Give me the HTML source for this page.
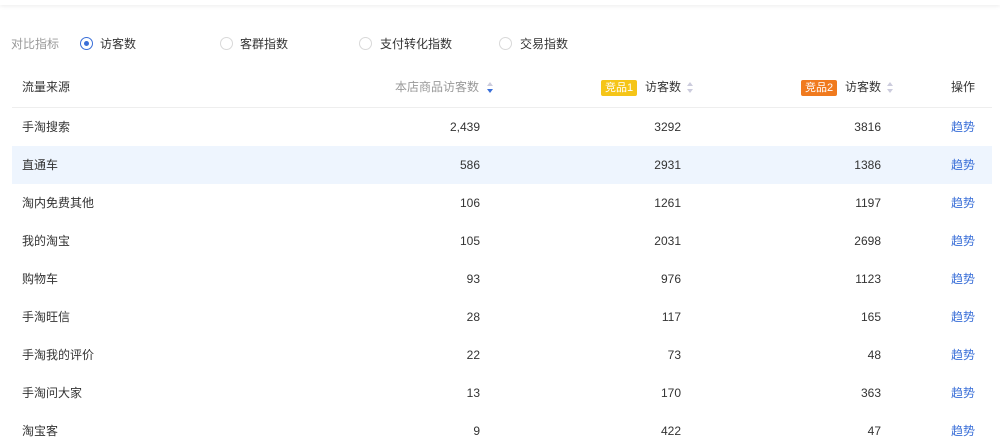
<!DOCTYPE html>
<html><head><meta charset="utf-8"><style>
*{margin:0;padding:0;box-sizing:border-box}
body{width:1000px;height:442px;background:#fff;font-family:"Liberation Sans","Noto Sans CJK SC",sans-serif;font-size:12px;color:#333;position:relative;overflow:hidden}
.top{position:absolute;left:0;top:0;width:1000px;height:5px;box-shadow:0 1px 4px rgba(0,0,0,.08)}
.a{position:absolute;white-space:nowrap;line-height:16px}
.r{text-align:right}
.radio{position:absolute;width:13px;height:13px;border:1px solid #d9d9d9;border-radius:50%;top:37px}
.radio.on{border-color:#3a6fd8}
.radio.on:after{content:"";position:absolute;left:3px;top:3px;width:5px;height:5px;border-radius:50%;background:#3a6fd8}
.row{position:absolute;left:12px;width:980px;height:38px}
.badge{position:absolute;top:80px;height:16px;line-height:16px;font-size:11px;color:#fff;padding:0 4px;border-radius:2px}
.sort{position:absolute;top:82px;width:6px;height:11px}
.sort:before,.sort:after{content:"";position:absolute;left:0;border-left:3px solid transparent;border-right:3px solid transparent}
.sort:before{top:0;border-bottom:4px solid #ccd}
.sort:after{bottom:0;border-top:4px solid #ccd}
.sort.d:after{border-top-color:#3a6fd8}
.lk{color:#3a6fd8}
</style></head><body>
<div class="top"></div>
<div class="a" style="left:11px;top:36px;color:#999">对比指标</div>
<div class="radio on" style="left:80px"></div><div class="a" style="left:100px;top:36px">访客数</div>
<div class="radio" style="left:220px"></div><div class="a" style="left:240px;top:36px">客群指数</div>
<div class="radio" style="left:359px"></div><div class="a" style="left:380px;top:36px">支付转化指数</div>
<div class="radio" style="left:499px"></div><div class="a" style="left:520px;top:36px">交易指数</div>

<div class="a" style="left:22px;top:79px">流量来源</div>
<div class="a" style="left:395px;top:79px;color:#999">本店商品访客数</div><div class="sort d" style="left:487px"></div>
<div class="badge" style="left:601px;background:#f5c518">竞品1</div><div class="a" style="left:645px;top:79px">访客数</div><div class="sort" style="left:687px"></div>
<div class="badge" style="left:801px;background:#f07a1e">竞品2</div><div class="a" style="left:845px;top:79px">访客数</div><div class="sort" style="left:887px"></div>
<div class="a" style="left:951px;top:79px">操作</div>
<div style="position:absolute;left:12px;top:107px;width:980px;height:1px;background:#eee"></div>
<div class="row" style="top:146px;background:#eef5fe"></div>

<div id="rows"></div>
<script>
var d=[["手淘搜索","2,439","3292","3816"],["直通车","586","2931","1386"],["淘内免费其他","106","1261","1197"],["我的淘宝","105","2031","2698"],["购物车","93","976","1123"],["手淘旺信","28","117","165"],["手淘我的评价","22","73","48"],["手淘问大家","13","170","363"],["淘宝客","9","422","47"]];
var h="";d.forEach(function(r,i){var t=119+i*38;
h+='<div class="a" style="left:22px;top:'+t+'px">'+r[0]+'</div>'+
'<div class="a r" style="right:520px;top:'+t+'px">'+r[1]+'</div>'+
'<div class="a r" style="right:319px;top:'+t+'px">'+r[2]+'</div>'+
'<div class="a r" style="right:119px;top:'+t+'px">'+r[3]+'</div>'+
'<div class="a lk" style="left:951px;top:'+t+'px">趋势</div>';});
document.getElementById("rows").innerHTML=h;
</script>
</body></html>
